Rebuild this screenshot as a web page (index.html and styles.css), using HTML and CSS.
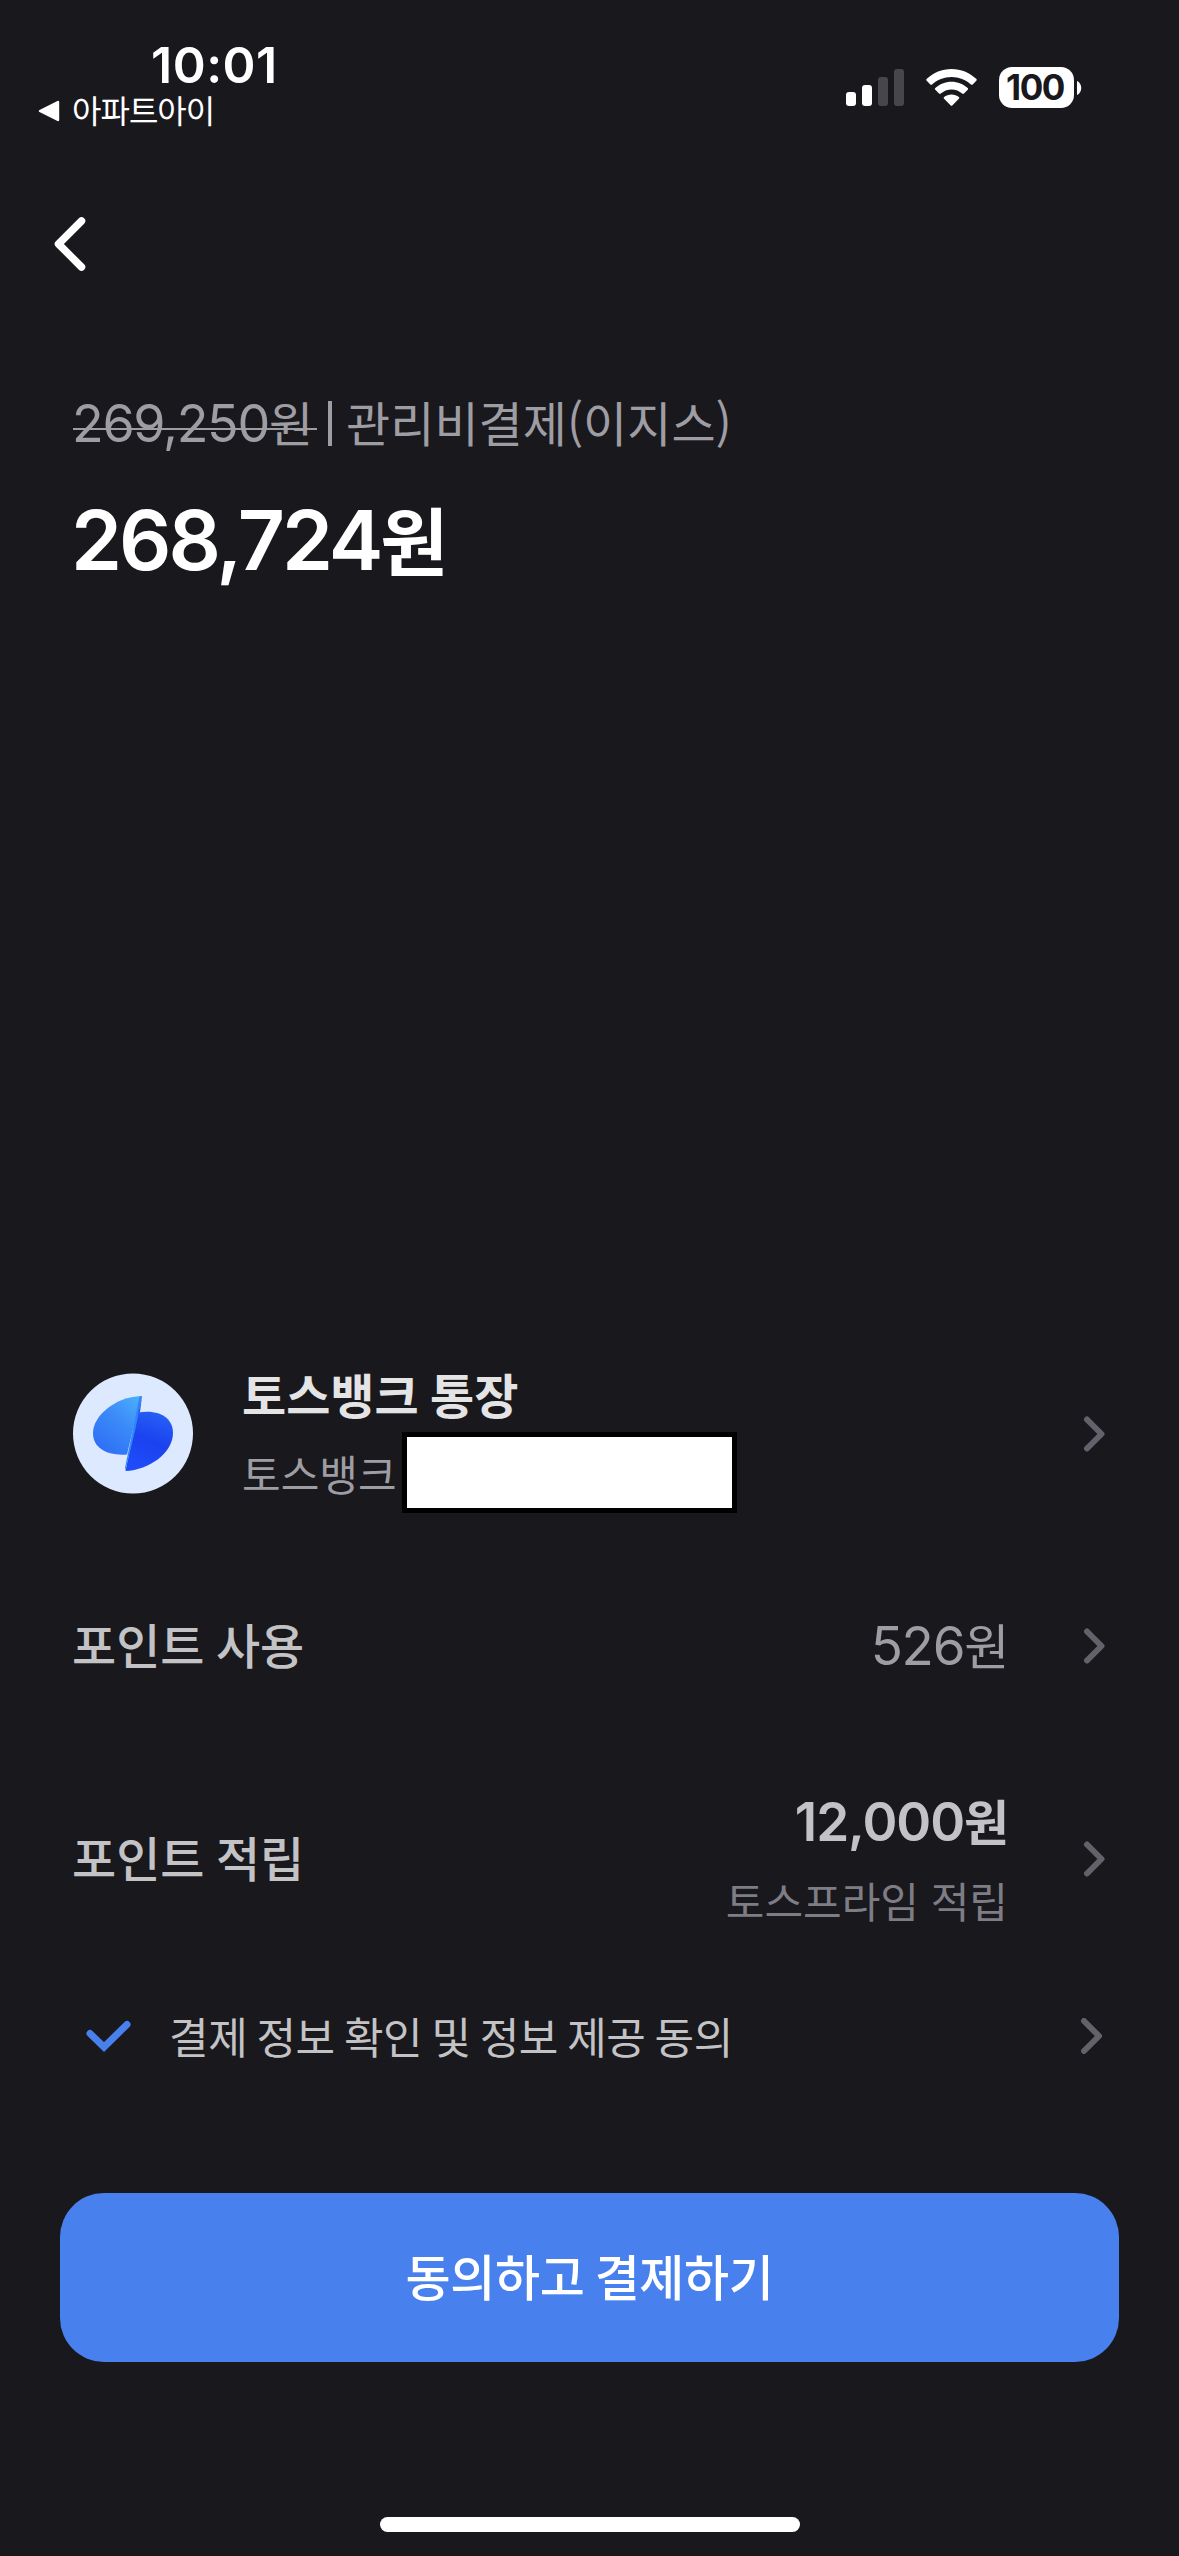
FILE: index.html
```html
<!DOCTYPE html>
<html lang="ko">
<head>
<meta charset="utf-8">
<title>결제하기</title>
<link rel="stylesheet" href="styles.css">
</head>
<body>
<header class="status">
  <div class="status-left">
    <div class="clock">10:01</div>
    <div class="return"><svg width="22" height="22" viewBox="0 0 22 22"><path d="M2 11L20 2V20Z" fill="#fff" stroke="#fff" stroke-width="2.4" stroke-linejoin="round"/></svg><span>아파트아이</span></div>
  </div>
  <div class="status-right">
    <svg width="58" height="38" viewBox="0 0 58 38"><g fill="#fff"><rect y="24" width="10" height="14" rx="3"/><rect x="16" y="17" width="10" height="21" rx="3"/></g><g fill="#47464b"><rect x="32" y="9" width="10" height="29" rx="3"/><rect x="48" y="1" width="10" height="37" rx="3"/></g></svg>
    <svg class="wifi" width="51" height="38" viewBox="0 0 51 38"><g fill="#fff"><path d="M25.500 1C35 1 43.700 4.700 50.200 10.800C50.900 11.500 50.900 12.100 50.300 12.700L46.700 16.400C46.100 17 45.500 17 44.900 16.400C39.700 11.700 33 8.900 25.500 8.900S11.300 11.700 6.100 16.400C5.500 17 4.900 17 4.300 16.400L.7 12.700C.1 12.100.1 11.500.8 10.800C7.300 4.700 16 1 25.500 1Z"/><path d="M25.500 13.700C31.700 13.700 37.400 16.100 41.700 20C42.300 20.600 42.300 21.200 41.700 21.800L38 25.500C37.400 26.100 36.800 26.100 36.200 25.600C33.300 23.100 29.700 21.500 25.500 21.500S17.700 23.100 14.800 25.600C14.200 26.100 13.600 26.100 13 25.500L9.300 21.800C8.700 21.200 8.700 20.600 9.300 20C13.600 16.100 19.300 13.700 25.500 13.700Z"/><path d="M25.500 26.400C28.300 26.400 30.900 27.400 32.900 29.100C33.500 29.600 33.500 30.200 32.900 30.800L26.500 37.300C25.800 38 25.200 38 24.500 37.300L18.100 30.800C17.500 30.200 17.500 29.600 18.100 29.100C20.100 27.400 22.700 26.400 25.500 26.400Z"/></g></svg>
    <div class="battery"><span>100</span></div>
    <svg class="nub" width="5" height="14" viewBox="0 0 5 14"><path d="M0 0C2.500 1 4.300 3.700 4.300 7S2.500 13 0 14Z" fill="#fff"/></svg>
  </div>
</header>
<nav class="nav"><svg width="32" height="56" viewBox="0 0 32 56"><path d="M27.500 4L4.500 27L27.500 50" fill="none" stroke="#fff" stroke-width="7.500" stroke-linecap="round" stroke-linejoin="round"/></svg></nav>
<section class="summary">
  <p class="origin"><s>269,250<span class="ko">원</span></s><span class="divider"></span><span class="ko product">관리비결제(이지스)</span></p>
  <h1 class="total">268,724<span class="ko">원</span></h1>
</section>
<main class="rows">
  <div class="row account">
    <svg class="logo" width="120" height="121" viewBox="0 0 120 121">
      <defs>
        <linearGradient id="wing-l" x1="1" y1="0" x2=".3" y2="1"><stop offset="0" stop-color="#4db0fd"/><stop offset=".5" stop-color="#3b8af8"/><stop offset="1" stop-color="#2f70f6"/></linearGradient>
        <linearGradient id="wing-r" x1=".7" y1="0" x2=".4" y2="1"><stop offset="0" stop-color="#2760f6"/><stop offset=".5" stop-color="#1b42ef"/><stop offset="1" stop-color="#1f4cfa"/></linearGradient>
      </defs>
      <circle cx="60" cy="60.500" r="60" fill="#dde9ff"/>
      <path d="M65 39.500C88 36 100 46 100 60C100 80 76 97 52.500 98Z" fill="url(#wing-r)"/>
      <path d="M68 23C42 24 20 43 20 60C20 75 34 83 54 81.500Z" fill="url(#wing-l)"/>
      <path d="M66.500 23.500L69 23L62 58L52.500 97L52 95Z" fill="#2f86f8"/>
      <path d="M69 23L67 39L65 41Z" fill="#1f55ee"/>
    </svg>
    <div class="names">
      <div class="account-name">토스뱅크 통장</div>
      <div class="account-sub"><span>토스뱅크</span><span class="mask"></span></div>
    </div>
    <svg class="go" width="23" height="36" viewBox="0 0 23 36"><path d="M4 3.500L18.500 18L4 32.500"/></svg>
  </div>
  <div class="row use">
    <span class="label">포인트 사용</span>
    <span class="value">526<span class="ko">원</span></span>
    <svg class="go" width="23" height="36" viewBox="0 0 23 36"><path d="M4 3.500L18.500 18L4 32.500"/></svg>
  </div>
  <div class="row save">
    <span class="label">포인트 적립</span>
    <div class="saving"><span class="value strong">12,000<span class="ko">원</span></span><span class="note">토스프라임 적립</span></div>
    <svg class="go" width="23" height="36" viewBox="0 0 23 36"><path d="M4 3.500L18.500 18L4 32.500"/></svg>
  </div>
  <div class="row agree">
    <svg class="check" width="46" height="32" viewBox="0 0 46 32"><path d="M4 13.500L18 27L41 4.500" fill="none" stroke="#4880ee" stroke-width="7" stroke-linecap="round" stroke-linejoin="miter"/></svg>
    <span class="terms">결제 정보 확인 및 정보 제공 동의</span>
    <svg class="go" width="23" height="36" viewBox="0 0 23 36"><path d="M4 3L19 18L4 33"/></svg>
  </div>
</main>
<button class="pay" type="button">동의하고 결제하기</button>
<div class="home"></div>
</body>
</html>
```
FILE: styles.css
```css
* { box-sizing: border-box; margin: 0; padding: 0; }
body {
  width: 1179px; height: 2556px; overflow: hidden;
  display: flex; flex-direction: column;
  background: #19181d; color: #fff;
  font-family: Inter, "Noto Sans CJK KR", sans-serif;
  white-space: nowrap;
}
svg { display: block; flex: none; }
.ko, .return, .names, .label, .note, .terms, .pay { font-family: "Noto Sans CJK KR", sans-serif; }
.status { height: 217px; display: flex; justify-content: space-between; }
.status-left { padding: 35px 0 0 38px; }
.clock { font-size: 50px; line-height: 60px; font-weight: 600; padding-left: 113px; letter-spacing: .5px; }
.return { display: flex; align-items: center; gap: 12px; height: 32px; font-size: 32px; line-height: 32px; letter-spacing: -1px; }
.return span { padding-bottom: 5px; }
.status-right { display: flex; padding: 67px 97px 0 0; height: 108px; align-items: flex-start; }
.status-right > svg { margin-top: 1px; }
.status-right .wifi { margin-left: 22px; }
.battery { margin-left: 22px; width: 75px; height: 41px; border-radius: 13px; background: #fff; color: #19181d; font-size: 35px; font-weight: 700; line-height: 41px; text-align: center; letter-spacing: -1.500px; padding-right: 3px; }
.status-right .nub { margin: 14px 0 0 3px; }
.nav { height: 162px; padding-left: 54px; }
.summary { height: 975px; padding-left: 73px; }
.origin { display: flex; align-items: center; height: 84px; margin-left: -1px; line-height: 84px; font-size: 52px; letter-spacing: -1.300px; color: #9e9da3; }
.origin s { height: 84px; padding-right: 4px; text-decoration: none; background: linear-gradient(#9e9da3, #9e9da3) 1px 49px / 100% 2px no-repeat; }
.origin .ko { font-size: 48px; line-height: 84px; letter-spacing: 0; }
.origin .divider { width: 4px; height: 45px; margin: 4px 14px 0 11px; background: #9e9da3; }
.total { margin: 25px 0 0 -2px; line-height: 100px; font-size: 82px; font-weight: 600; letter-spacing: -3px; }
.total .ko { font-size: 74px; font-weight: 700; line-height: 100px; }
.row { display: flex; align-items: center; padding: 0 73px 0 73px; }
.go { fill: none; stroke: #63626b; stroke-width: 6; stroke-linecap: round; stroke-linejoin: round; }
.account { height: 159px; }
.names { margin: 0 auto 0 49px; padding-top: 6px; }
.account-name { margin-bottom: 6px; font-size: 48px; font-weight: 700; line-height: 66px; word-spacing: -2px; color: #e4e4e5; }
.account-sub { display: flex; align-items: center; height: 81px; font-size: 42px; color: #9e9da3; }
.mask { margin-left: 5px; width: 335px; height: 81px; border: 5px solid #000; background: #fff; }
.use { height: 213px; margin-top: 26px; }
.save { height: 213px; }
.label { margin: 0 auto 0 -1px; padding-bottom: 6px; font-size: 48px; font-weight: 500; word-spacing: -2px; color: #c3c3c6; }
.value { font-size: 53px; letter-spacing: -1.300px; line-height: 70px; color: #9e9da3; }
.use .value { padding-bottom: 2px; }
.value .ko { font-size: 49px; line-height: 70px; }
.value.strong { font-weight: 600; letter-spacing: -1.100px; color: #c3c3c6; }
.value.strong .ko { font-weight: 700; }
.row .value + .go, .saving + .go { margin-left: 75px; }
.saving { display: flex; flex-direction: column; align-items: flex-end; padding-top: 5px; }
.note { margin: 3px 0 -2px; font-size: 42px; line-height: 80px; color: #7e7d86; }
.agree { height: 142px; }
.row.agree { padding-right: 76px; }
.check { margin: 0 37px 0 13px; }
.terms { margin-right: auto; padding-bottom: 2px; font-size: 43px; letter-spacing: -.4px; word-spacing: -2.500px; color: #c3c3c6; }
.pay { margin: 86px 60px 0; height: 169px; padding-bottom: 6px; border: 0; border-radius: 44px; background: #4880ee; color: #fff; font-size: 49px; font-weight: 500; letter-spacing: -.4px; word-spacing: -3px; }
.home { margin: 155px auto 0; width: 420px; height: 15px; border-radius: 8px; background: #fff; }
```
